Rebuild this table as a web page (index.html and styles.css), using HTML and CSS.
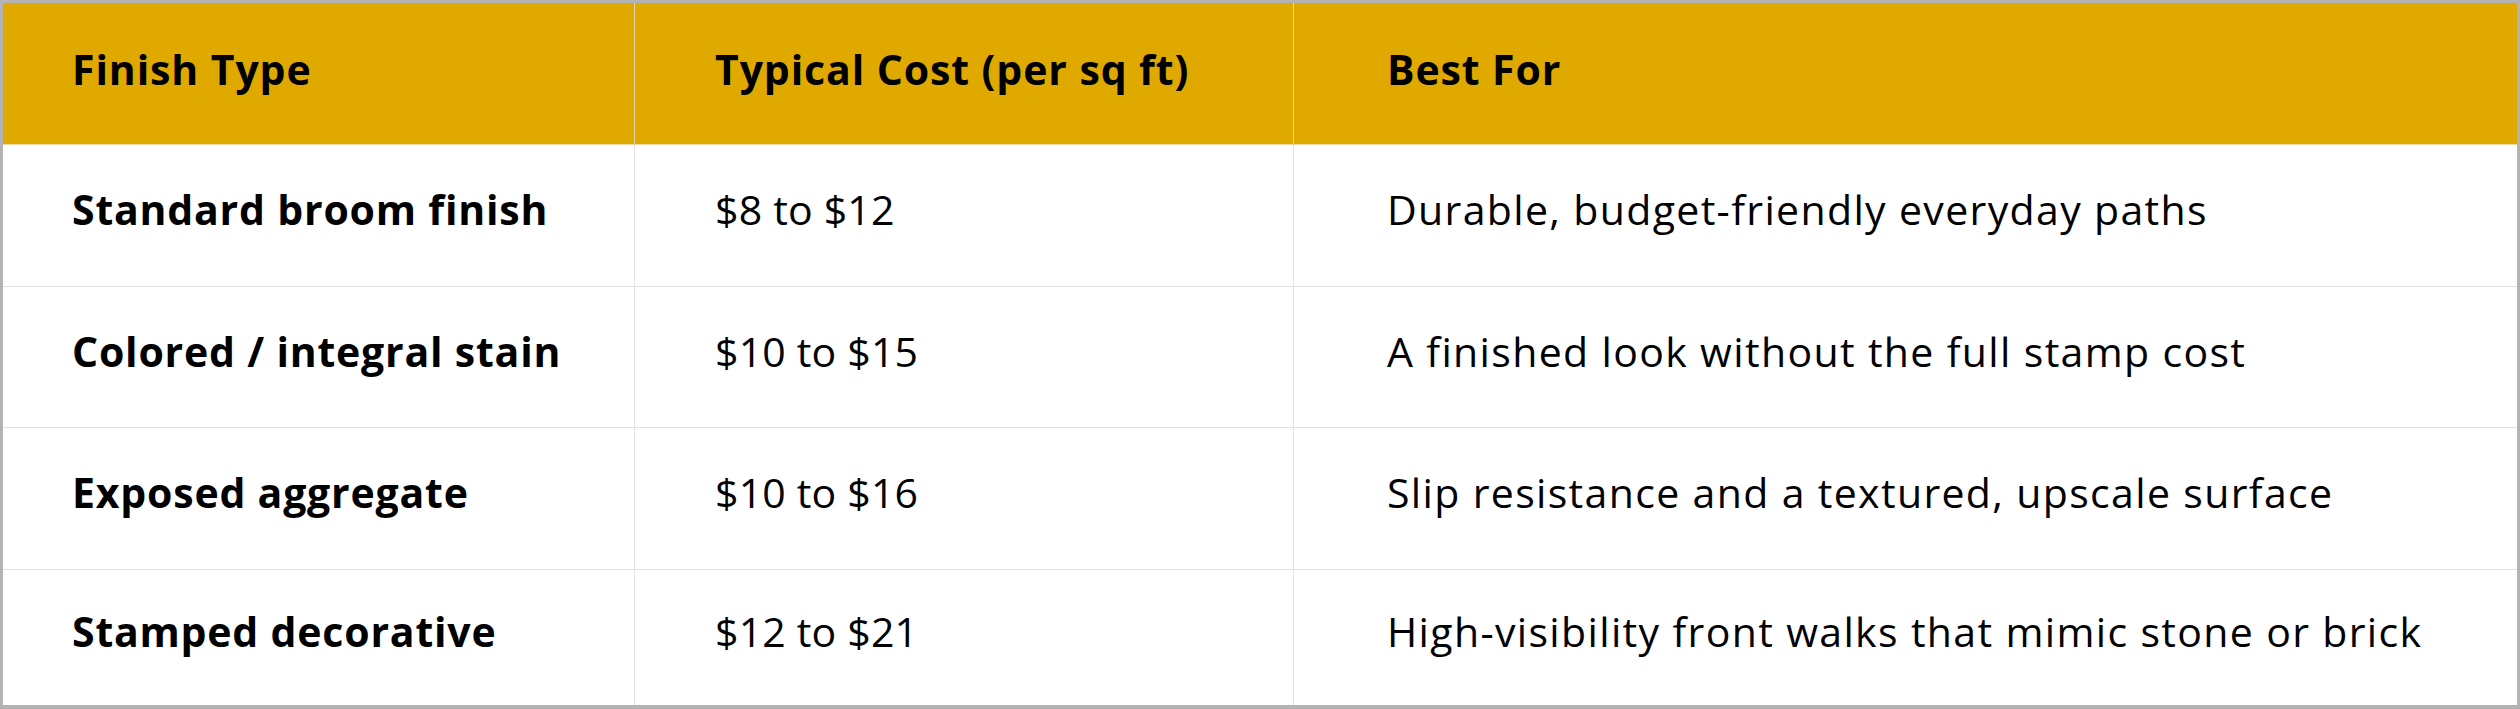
FILE: index.html
```html
<!DOCTYPE html>
<html lang="en">
<head>
<meta charset="utf-8">
<title>Finish Types</title>
<link rel="stylesheet" href="styles.css">
</head>
<body>
<div class="table">
  <div class="cell head c1">Finish Type</div>
  <div class="cell head c2">Typical Cost (per sq ft)</div>
  <div class="cell head c3">Best For</div>

  <div class="cell name c1">Standard broom finish</div>
  <div class="cell cost c2">$8 to $12</div>
  <div class="cell c3">Durable, budget-friendly everyday paths</div>

  <div class="cell name c1">Colored / integral stain</div>
  <div class="cell cost c2">$10 to $15</div>
  <div class="cell c3">A finished look without the full stamp cost</div>

  <div class="cell name c1">Exposed aggregate</div>
  <div class="cell cost c2">$10 to $16</div>
  <div class="cell c3">Slip resistance and a textured, upscale surface</div>

  <div class="cell name c1 last">Stamped decorative</div>
  <div class="cell cost c2 last">$12 to $21</div>
  <div class="cell c3 last">High-visibility front walks that mimic stone or brick</div>
</div>
</body>
</html>
```

FILE: styles.css
```css
html, body {
  margin: 0;
  padding: 0;
  background: #ffffff;
}

.table {
  box-sizing: border-box;
  width: 2520px;
  height: 709px;
  border: 3px solid #b3b3b3;
  border-bottom-width: 4px;
  display: grid;
  grid-template-columns: 632px 659px 1fr;
  grid-template-rows: 142px 142px 141px 142px 1fr;
  font-family: "Open Sans", "Liberation Sans", sans-serif;
  color: #000000;
  background: #ffffff;
}

.cell {
  box-sizing: border-box;
  display: flex;
  align-items: center;
  padding-bottom: 13px;
  font-size: 41px;
  font-weight: 400;
  letter-spacing: 1.35px;
  white-space: nowrap;
  border-bottom: 1px solid #e2e2e2;
}

.cell.c1, .cell.c2 {
  border-right: 1px solid #e2e2e2;
}

.cell.c1 { padding-left: 69px; }
.cell.c2 { padding-left: 80px; }
.cell.c3 { padding-left: 93px; }

.cell.last { border-bottom: none; }

.cell.head {
  background: #e0a900;
  font-weight: 700;
  letter-spacing: 0.9px;
  padding-bottom: 10px;
  border-bottom-color: #ecd9a6;
  border-right-color: #e6d6a8;
}

.cell.name {
  font-weight: 700;
  letter-spacing: 0.8px;
}

.cell.cost {
  letter-spacing: 0.2px;
}
```
